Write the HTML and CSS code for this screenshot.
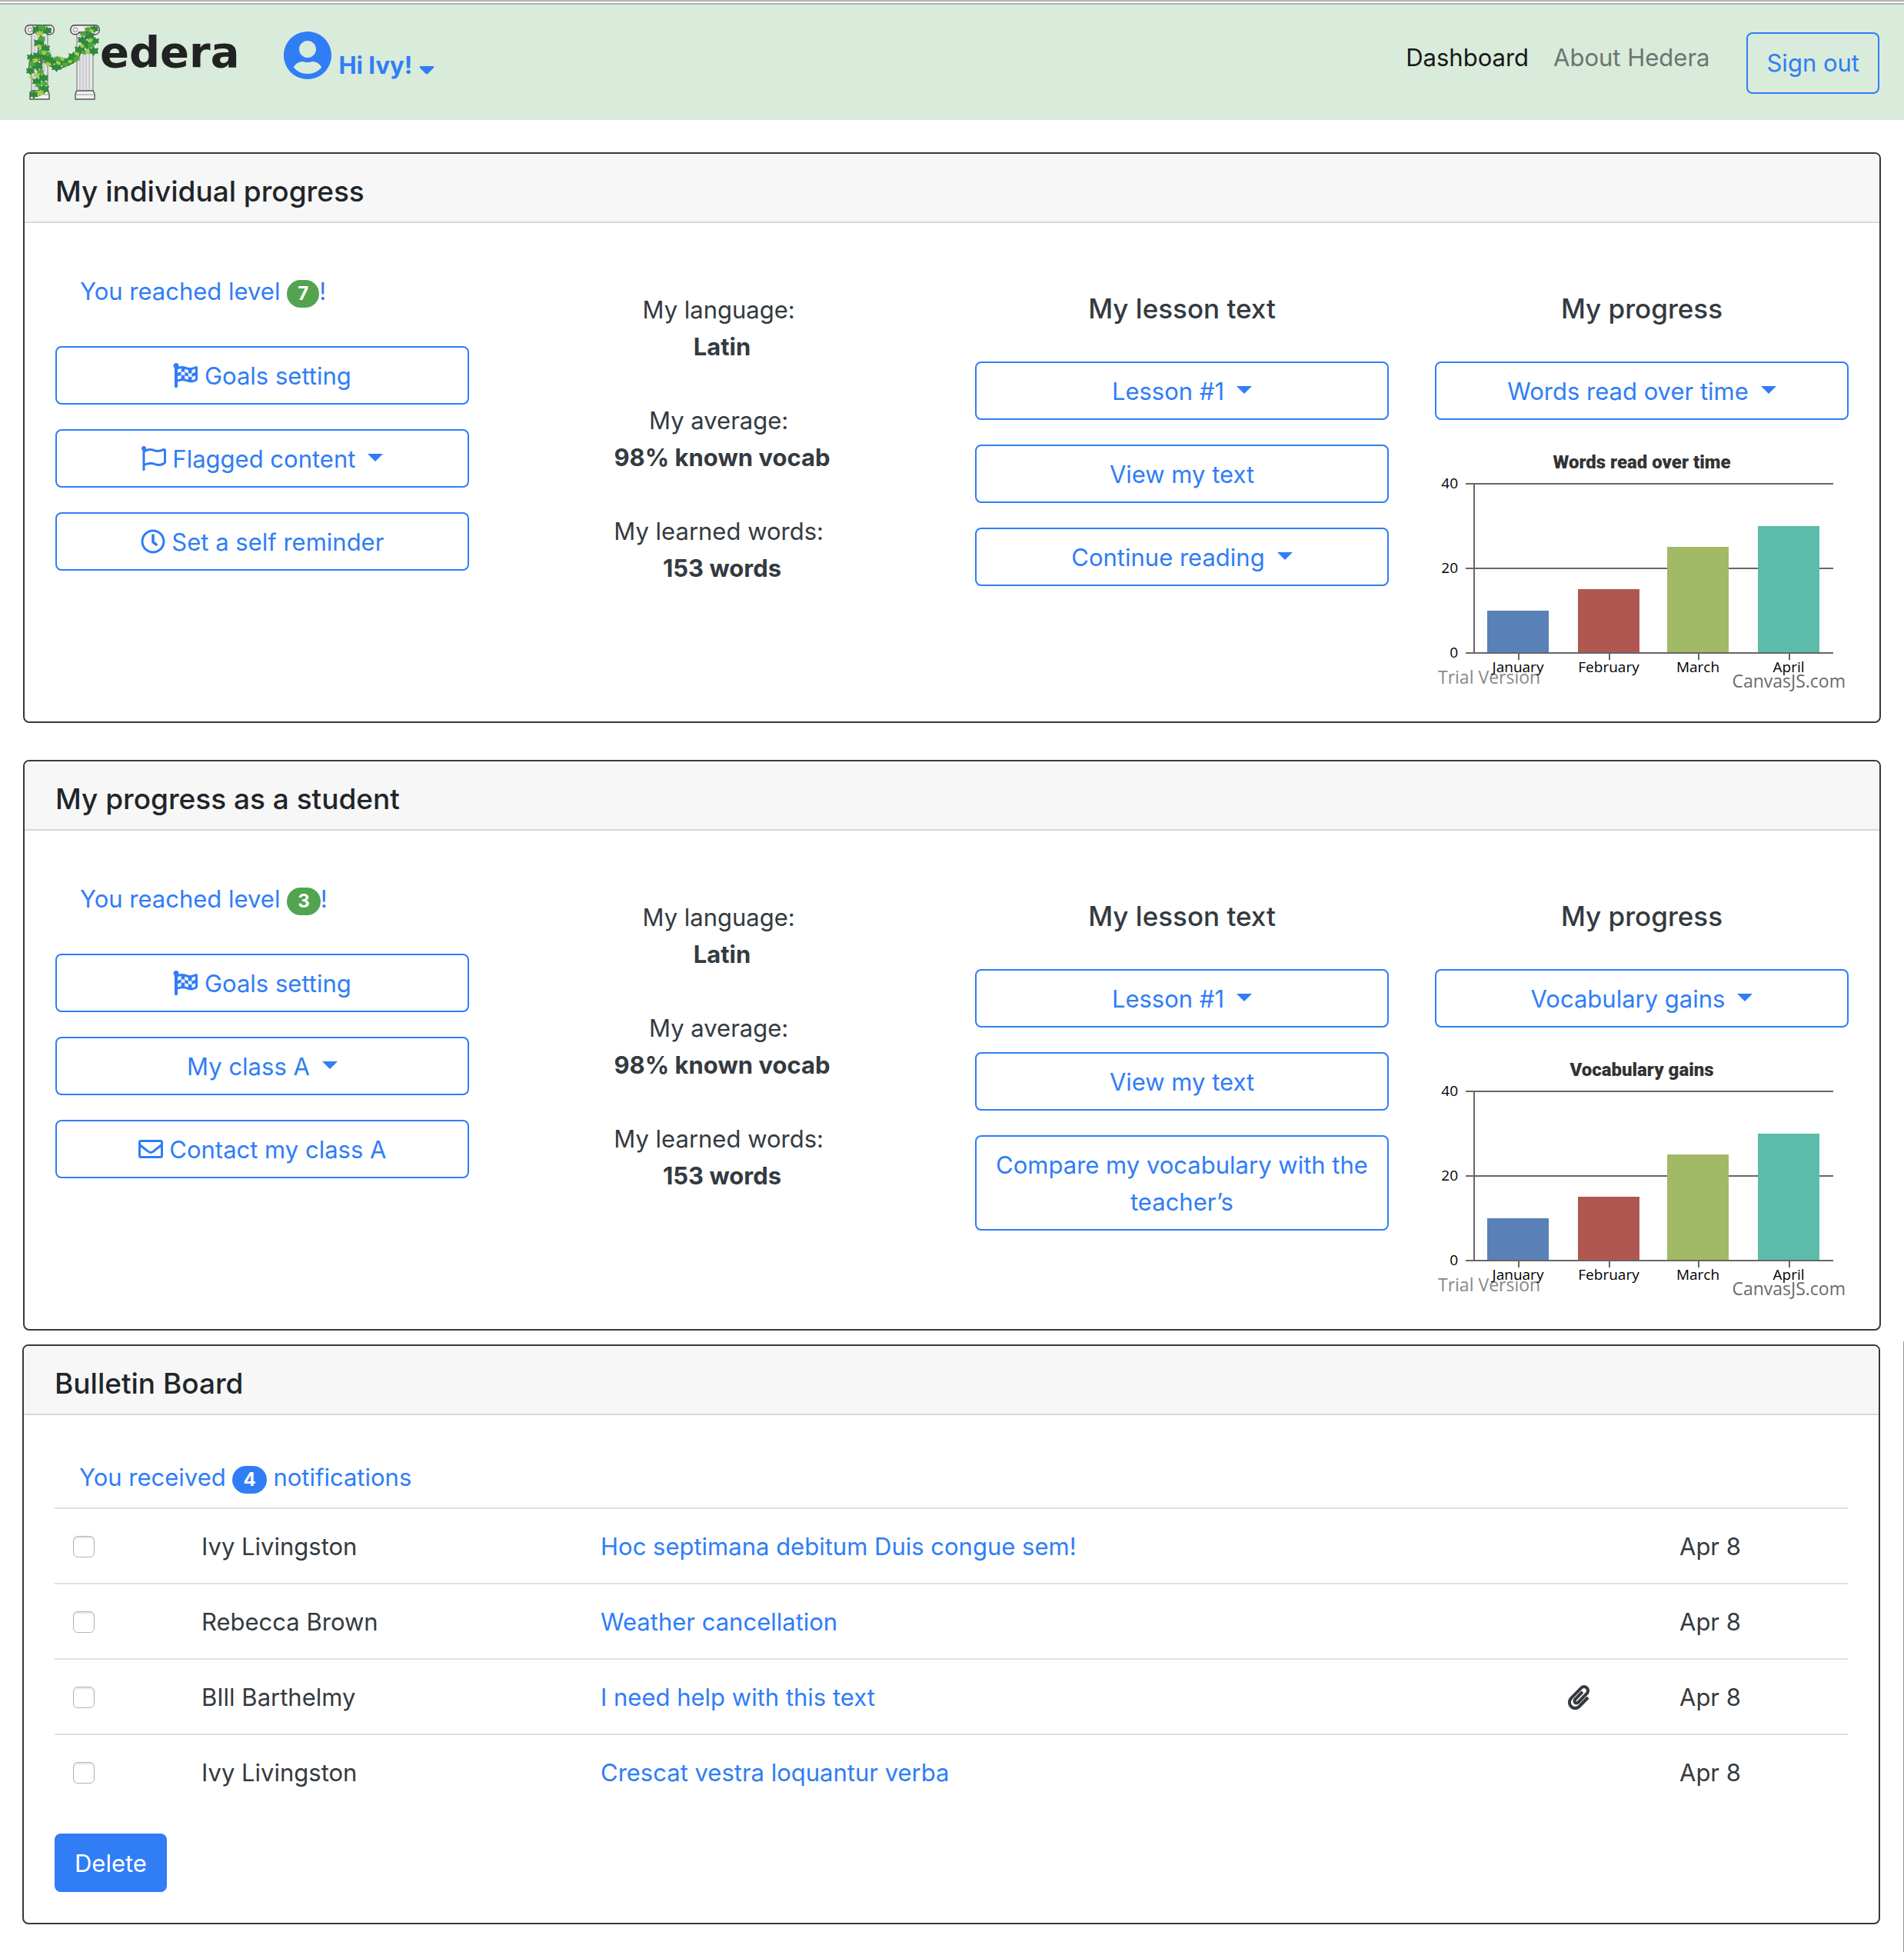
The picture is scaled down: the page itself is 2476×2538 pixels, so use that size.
FILE: index.html
```html
<!DOCTYPE html>
<html lang="en">
<head>
<meta charset="utf-8">
<title>Hedera</title>
<meta name="viewport" content="width=device-width, initial-scale=1">
<link rel="stylesheet" href="styles.css">
</head>
<body>
<svg class="sprite" aria-hidden="true">
  <symbol id="i-user" viewBox="0 0 496 512"><path d="M248 8C111 8 0 119 0 256s111 248 248 248 248-111 248-248S385 8 248 8zm0 96c48.6 0 88 39.4 88 88s-39.4 88-88 88-88-39.4-88-88 39.4-88 88-88zm0 344c-58.7 0-111.3-26.6-146.5-68.2 18.8-35.4 55.6-59.8 98.5-59.8 2.4 0 4.8.4 7.1 1.1 13 4.2 26.6 6.9 40.9 6.9 14.3 0 28-2.7 40.9-6.9 2.3-.7 4.7-1.1 7.1-1.1 42.9 0 79.7 24.4 98.5 59.8C359.3 421.4 306.7 448 248 448z"/></symbol>
  <symbol id="i-caret" viewBox="0 0 320 512"><path d="M31.3 192h257.3c17.8 0 26.7 21.5 14.1 34.1L174.1 354.8c-7.8 7.8-20.5 7.8-28.3 0L17.2 226.1C4.6 213.5 13.5 192 31.3 192z"/></symbol>
  <symbol id="i-goal" viewBox="0 0 512 512"><path d="M243.2 189.9V258c26.1 5.9 49.3 15.6 73.6 22.3v-68.2c-26-5.8-49.4-15.5-73.6-22.2zm223.3-123c-34.3 15.9-76.5 31.9-117 31.9C296 98.8 251.7 64 184.3 64c-25 0-47.3 4.4-68 12 2.8-7.3 4.1-15.2 3.6-23.6C118.1 24 94.8 1.2 66.3 0 34.3-1.3 8 24.3 8 56c0 19 9.5 35.8 24 45.9V488c0 13.3 10.7 24 24 24h16c13.3 0 24-10.7 24-24v-94.4c28.3-12.1 63.6-22.1 114.4-22.1 53.6 0 97.8 34.8 165.2 34.8 48.2 0 86.7-16.3 122.5-40.9 8.7-6 13.8-15.8 13.8-26.4V95.900c.1-23.300-24.200-38.800-45.400-29zM169.600 325.500c-25.800 2.700-50 8.200-73.600 16.600v-70.500c26.200-9.300 47.500-15 73.600-17.400v71.300zM464 191c-23.600 9.800-46.300 19.500-73.600 23.900V286c24.800-3.400 51.400-11.800 73.600-26v70.500c-25.100 16.100-48.500 24.700-73.600 27.100V286c-27 3.700-47.900 1.500-73.600-5.600v67.400c-23.900-7.400-47.300-16.700-73.600-21.300V258c-19.700-4.400-40.800-6.800-73.600-3.800v-70c-22.400 3.100-44.600 10.200-73.600 20.900v-70.500c33.200-12.200 50.100-19.800 73.600-22v71.600c27-3.700 48.400-1.300 73.600 5.700v-67.400c23.700 7.400 47.200 16.700 73.600 21.300v68.400c23.700 5.300 47.600 6.900 73.600 2.700V143c27-4.800 52.300-13.600 73.600-22.500z"/></symbol>
  <symbol id="i-flag" viewBox="0 0 512 512"><path d="M336.174 80c-49.132 0-93.305-32-161.913-32-31.301 0-58.303 6.482-80.721 15.168a48.04 48.04 0 0 0 2.142-20.727C93.067 19.575 74.167 1.594 51.201.104 23.242-1.71 0 20.431 0 48c0 17.764 9.657 33.262 24 41.562V496c0 8.837 7.163 16 16 16h16c8.837 0 16-7.163 16-16v-83.443C109.869 395.28 143.259 384 199.826 384c49.132 0 93.305 32 161.913 32 58.479 0 101.972-22.617 128.548-39.981C503.846 367.161 512 352.051 512 335.855V95.937c0-34.459-35.264-57.768-66.904-44.117C409.193 67.309 371.641 80 336.174 80zM464 336c-21.783 15.412-60.824 32-102.261 32-59.945 0-102.002-32-161.913-32-43.361 0-96.379 9.403-127.826 24V128c21.784-15.412 60.824-32 102.261-32 59.945 0 102.002 32 161.913 32 43.271 0 96.32-17.366 127.826-32v240z"/></symbol>
  <symbol id="i-clock" viewBox="0 0 512 512"><path d="M256 8C119 8 8 119 8 256s111 248 248 248 248-111 248-248S393 8 256 8zm0 448c-110.5 0-200-89.5-200-200S145.500 56 256 56s200 89.500 200 200-89.500 200-200 200zm61.800-104.400l-84.900-61.700c-3.100-2.300-4.900-5.900-4.900-9.700V116c0-6.600 5.400-12 12-12h32c6.600 0 12 5.400 12 12v141.700l66.800 48.600c5.400 3.900 6.500 11.400 2.600 16.800L334.600 349c-3.900 5.300-11.400 6.500-16.800 2.600z"/></symbol>
  <symbol id="i-mail" viewBox="0 0 512 512"><path d="M464 64H48C21.49 64 0 85.49 0 112v288c0 26.51 21.49 48 48 48h416c26.51 0 48-21.49 48-48V112c0-26.51-21.49-48-48-48zm0 48v40.805c-22.422 18.259-58.168 46.651-134.587 106.49-16.841 13.247-50.201 45.072-73.413 44.701-23.208.375-56.579-31.459-73.413-44.701C106.18 199.465 70.425 171.067 48 152.805V112h416zM48 400V214.398c22.914 18.251 55.409 43.862 104.938 82.646 21.857 17.205 60.134 55.186 103.062 54.955 42.717.231 80.509-37.199 103.053-54.947 49.528-38.783 82.032-64.401 104.947-82.653V400H48z"/></symbol>
  <symbol id="i-clip" viewBox="0 0 448 512"><path d="M43.246 466.142c-58.43-60.289-57.341-157.511 1.386-217.581L254.392 34c44.316-45.332 116.351-45.336 160.671 0 43.89 44.894 43.943 117.329 0 162.276L232.214 383.128c-29.855 30.537-78.633 30.111-107.982-.998-28.275-29.97-27.368-77.473 1.452-106.953l143.743-146.835c6.182-6.314 16.312-6.422 22.626-.241l22.861 22.379c6.315 6.182 6.422 16.312.241 22.626L171.427 319.927c-4.932 5.045-5.236 13.428-.648 18.292 4.372 4.634 11.245 4.711 15.688.165l182.849-186.851c19.613-20.062 19.613-52.725-.011-72.798-19.189-19.627-49.957-19.637-69.154 0L90.39 293.295c-34.763 35.56-35.299 93.12-1.191 128.313 34.01 35.093 88.985 35.137 123.058.286l172.06-175.999c6.177-6.319 16.307-6.433 22.626-.256l22.877 22.364c6.319 6.177 6.434 16.307.256 22.626l-172.06 175.998c-59.576 60.938-155.943 60.216-214.77-.485z"/></symbol>
  <symbol id="column" viewBox="0 0 39 98">
    <path d="M9 11h21v77H9z" fill="#e4e4e6" stroke="#777" stroke-width="1"/>
    <path d="M13 13v73M17 13v73M21 13v73M25 13v73" stroke="#c4c4c8" stroke-width="1.4" fill="none"/>
    <path d="M6 .8h27c7 0 7 12 0 12-3 0-5-1-6-3H12c-1 2-3 3-6 3-7 0-7-12 0-12z" fill="#efeff0" stroke="#444" stroke-width="1.4"/>
    <circle cx="7" cy="6.8" r="2.8" fill="none" stroke="#888"/><circle cx="32" cy="6.8" r="2.8" fill="none" stroke="#888"/>
    <path d="M9 86h21l2 4v7H7v-7z" fill="#f2f2f2" stroke="#555" stroke-width="1.4"/>
    <path d="M8 91h23" stroke="#999"/>
  </symbol>
  <symbol id="leaf" viewBox="-6 -6 12 12" overflow="visible"><path d="M0-6l2 3 4-1-1 4 1 3-4 0-2 3-2-3-4 0 1-3-1-4 4 1z"/></symbol>
</svg>

<header class="navbar">
  <a class="brand" href="#">
    <svg class="brand-mark" viewBox="0 0 98 98" role="img" aria-label="H">
      <use href="#column" x="0" y="0" width="39" height="98"/>
      <use href="#column" x="59" y="0" width="39" height="98"/>
      <path d="M20 3c5 14-6 26 0 40s-4 30 0 50M8 48c20-8 24 14 40 8s22-8 26-24 6-20 12-28M5 60l2-14" fill="none" stroke="#4a5a2a" stroke-width="1.5"/>
      <g fill="#2f8a3a">
        <use href="#leaf" x="10" y="0" width="13" height="13"/><use href="#leaf" x="23" y="2" width="12" height="12"/><use href="#leaf" x="12" y="17" width="14" height="14"/><use href="#leaf" x="21" y="25" width="12" height="12"/><use href="#leaf" x="11" y="34" width="13" height="13"/><use href="#leaf" x="3" y="37" width="11" height="11"/><use href="#leaf" x="21" y="36" width="14" height="14"/><use href="#leaf" x="9" y="46" width="15" height="15"/><use href="#leaf" x="29" y="41" width="13" height="13"/><use href="#leaf" x="35" y="49" width="13" height="13"/><use href="#leaf" x="43" y="42" width="12" height="12"/><use href="#leaf" x="51" y="41" width="13" height="13"/><use href="#leaf" x="57" y="35" width="13" height="13"/><use href="#leaf" x="65" y="26" width="14" height="14"/><use href="#leaf" x="75" y="20" width="13" height="13"/><use href="#leaf" x="83" y="28" width="13" height="13"/><use href="#leaf" x="69" y="14" width="12" height="12"/><use href="#leaf" x="78" y="9" width="13" height="13"/><use href="#leaf" x="86" y="16" width="11" height="11"/><use href="#leaf" x="2" y="55" width="11" height="11"/><use href="#leaf" x="18" y="63" width="13" height="13"/><use href="#leaf" x="10" y="68" width="12" height="12"/><use href="#leaf" x="18" y="77" width="14" height="14"/><use href="#leaf" x="6" y="85" width="12" height="12"/><use href="#leaf" x="85" y="0" width="11" height="11"/>
      </g>
      <g fill="#4aa83e">
        <use href="#leaf" x="18" y="-1" width="10" height="10"/><use href="#leaf" x="18" y="14" width="9" height="9"/><use href="#leaf" x="17" y="31" width="9" height="9"/><use href="#leaf" x="5" y="47" width="9" height="9"/><use href="#leaf" x="26" y="34" width="8" height="8"/><use href="#leaf" x="38" y="40" width="9" height="9"/><use href="#leaf" x="49" y="48" width="8" height="8"/><use href="#leaf" x="63" y="40" width="9" height="9"/><use href="#leaf" x="74" y="32" width="8" height="8"/><use href="#leaf" x="82" y="22" width="9" height="9"/><use href="#leaf" x="72" y="8" width="8" height="8"/><use href="#leaf" x="16" y="57" width="9" height="9"/><use href="#leaf" x="14" y="75" width="8" height="8"/><use href="#leaf" x="22" y="73" width="8" height="8"/><use href="#leaf" x="78" y="2" width="9" height="9"/>
      </g>
      <g fill="#a5cf3c">
        <use href="#leaf" x="15" y="7" width="9" height="9"/><use href="#leaf" x="16" y="25" width="6" height="6"/><use href="#leaf" x="22" y="33" width="6" height="6"/><use href="#leaf" x="11" y="43" width="7" height="7"/><use href="#leaf" x="27" y="48" width="7" height="7"/><use href="#leaf" x="41" y="47" width="6" height="6"/><use href="#leaf" x="47" y="43" width="5" height="5"/><use href="#leaf" x="56" y="45" width="6" height="6"/><use href="#leaf" x="65" y="35" width="6" height="6"/><use href="#leaf" x="72" y="25" width="6" height="6"/><use href="#leaf" x="83" y="17" width="6" height="6"/><use href="#leaf" x="79" y="33" width="6" height="6"/><use href="#leaf" x="12" y="62" width="7" height="7"/><use href="#leaf" x="6" y="66" width="5" height="5"/><use href="#leaf" x="16" y="84" width="9" height="9"/><use href="#leaf" x="84" y="5" width="6" height="6"/>
      </g>
    </svg>
    <span class="brand-name">edera</span>
  </a>
  <button class="user-menu" type="button" aria-haspopup="true">
    <svg class="user-icon"><use href="#i-user"/></svg>
    <span class="user-name">Hi Ivy!</span>
    <svg class="user-caret"><use href="#i-caret"/></svg>
  </button>
  <nav class="nav">
    <a class="nav-link active" href="#">Dashboard</a>
    <a class="nav-link" href="#">About Hedera</a>
    <button class="btn btn-nav" type="button">Sign out</button>
  </nav>
</header>

<main>
  <div class="progress">
    <section class="card">
      <h2 class="card-header">My individual progress</h2>
      <div class="card-body columns">
        <div class="col">
          <p class="lead"><a href="#">You reached level <span class="badge badge-green">7</span>!</a></p>
          <div class="stack">
            <button class="btn" type="button"><svg class="icon"><use href="#i-goal"/></svg> Goals setting</button>
            <button class="btn toggle" type="button"><svg class="icon"><use href="#i-flag"/></svg> Flagged content</button>
            <button class="btn" type="button"><svg class="icon"><use href="#i-clock"/></svg> Set a self reminder</button>
          </div>
        </div>
        <div class="col stats">
          <p>My language:&nbsp;<br><strong>Latin</strong></p>
          <p>My average:&nbsp;<br><strong>98% known vocab</strong></p>
          <p>My learned words:&nbsp;<br><strong>153 words</strong></p>
        </div>
        <div class="col">
          <h3 class="col-title">My lesson text</h3>
          <div class="stack">
            <button class="btn toggle" type="button">Lesson #1</button>
            <button class="btn" type="button">View my text</button>
            <button class="btn toggle" type="button">Continue reading</button>
          </div>
        </div>
        <div class="col">
          <h3 class="col-title">My progress</h3>
          <div class="stack">
            <button class="btn toggle" type="button">Words read over time</button>
            <svg class="chart" viewBox="0 0 538 320" role="img" aria-label="Words read over time">
              <text class="chart-title" x="269" y="31">Words read over time</text>
              <path class="grid" d="M40 51H518M40 161H518M51 50V272M109 272v8M227 272v8M343 272v8M461 272v8"/>
              <rect x="68" y="216" width="80" height="54" fill="#5a81b7"/>
              <rect x="186" y="188" width="80" height="82" fill="#b15751"/>
              <rect x="302" y="133" width="80" height="137" fill="#a2b965"/>
              <rect x="420" y="106" width="80" height="164" fill="#5dbba9"/>
              <path class="grid" d="M40 271H518"/>
              <g class="axis-y"><text x="30" y="57">40</text><text x="30" y="167">20</text><text x="30" y="277">0</text></g>
              <text class="note" x="4" y="311">Trial Version</text>
              <g class="axis-x"><text x="108" y="296">January</text><text x="226" y="296">February</text><text x="342" y="296">March</text><text x="460" y="296">April</text></g>
              <text class="note credit" x="534" y="316">CanvasJS.com</text>
            </svg>
          </div>
        </div>
      </div>
    </section>

    <section class="card">
      <h2 class="card-header">My progress as a student</h2>
      <div class="card-body columns">
        <div class="col">
          <p class="lead"><a href="#">You reached level <span class="badge badge-green">3</span>!</a></p>
          <div class="stack">
            <button class="btn" type="button"><svg class="icon"><use href="#i-goal"/></svg> Goals setting</button>
            <button class="btn toggle" type="button">My class A</button>
            <button class="btn" type="button"><svg class="icon"><use href="#i-mail"/></svg> Contact my class A</button>
          </div>
        </div>
        <div class="col stats">
          <p>My language:&nbsp;<br><strong>Latin</strong></p>
          <p>My average:&nbsp;<br><strong>98% known vocab</strong></p>
          <p>My learned words:&nbsp;<br><strong>153 words</strong></p>
        </div>
        <div class="col">
          <h3 class="col-title">My lesson text</h3>
          <div class="stack">
            <button class="btn toggle" type="button">Lesson #1</button>
            <button class="btn" type="button">View my text</button>
            <button class="btn" type="button">Compare my vocabulary with the teacher’s</button>
          </div>
        </div>
        <div class="col">
          <h3 class="col-title">My progress</h3>
          <div class="stack">
            <button class="btn toggle" type="button">Vocabulary gains</button>
            <svg class="chart" viewBox="0 0 538 320" role="img" aria-label="Vocabulary gains">
              <text class="chart-title" x="269" y="31">Vocabulary gains</text>
              <path class="grid" d="M40 51H518M40 161H518M51 50V272M109 272v8M227 272v8M343 272v8M461 272v8"/>
              <rect x="68" y="216" width="80" height="54" fill="#5a81b7"/>
              <rect x="186" y="188" width="80" height="82" fill="#b15751"/>
              <rect x="302" y="133" width="80" height="137" fill="#a2b965"/>
              <rect x="420" y="106" width="80" height="164" fill="#5dbba9"/>
              <path class="grid" d="M40 271H518"/>
              <g class="axis-y"><text x="30" y="57">40</text><text x="30" y="167">20</text><text x="30" y="277">0</text></g>
              <text class="note" x="4" y="311">Trial Version</text>
              <g class="axis-x"><text x="108" y="296">January</text><text x="226" y="296">February</text><text x="342" y="296">March</text><text x="460" y="296">April</text></g>
              <text class="note credit" x="534" y="316">CanvasJS.com</text>
            </svg>
          </div>
        </div>
      </div>
    </section>
  </div>

  <div class="board">
    <section class="card">
      <h2 class="card-header">Bulletin Board</h2>
      <div class="card-body">
        <p class="notice"><a href="#">You received <span class="badge">4</span> notifications</a></p>
        <table class="messages">
          <colgroup><col class="c-check"><col class="c-name"><col><col class="c-clip"><col class="c-date"></colgroup>
          <tbody>
            <tr><td><input type="checkbox" id="m1"></td><td><label for="m1">Ivy Livingston</label></td><td><a href="#">Hoc septimana debitum Duis congue sem!</a></td><td></td><td>Apr 8</td></tr>
            <tr><td><input type="checkbox" id="m2"></td><td><label for="m2">Rebecca Brown</label></td><td><a href="#">Weather cancellation</a></td><td></td><td>Apr 8</td></tr>
            <tr><td><input type="checkbox" id="m3"></td><td><label for="m3">BIll Barthelmy</label></td><td><a href="#">I need help with this text</a></td><td><svg class="clip" role="img" aria-label="Attachment"><use href="#i-clip"/></svg></td><td>Apr 8</td></tr>
            <tr><td><input type="checkbox" id="m4"></td><td><label for="m4">Ivy Livingston</label></td><td><a href="#">Crescat vestra loquantur verba</a></td><td></td><td>Apr 8</td></tr>
          </tbody>
        </table>
        <button class="btn btn-primary" type="button">Delete</button>
      </div>
    </section>
  </div>
</main>
</body>
</html>
```
FILE: styles.css
```css
:root {
  --blue: #307df6;
  --dark: #343a40;
  --ink: #212529;
}

* { box-sizing: border-box; }

body {
  margin: 0;
  background: #fff;
  color: var(--dark);
  font: 400 31px/48px Inter, "Liberation Sans", sans-serif;
}

h2, h3, p { margin: 0; }
a { color: var(--blue); text-decoration: none; }
button { font: inherit; cursor: pointer; }
svg { fill: currentColor; }
.sprite { display: none; }

/* Top bar */
.navbar {
  display: flex;
  align-items: flex-start;
  padding: 26px 32px;
  border-top: 6px double #b4b4b4;
  background: #d9ebdb;
  background-clip: padding-box;
}
.brand { display: flex; color: #222; }
.brand-mark { width: 98px; height: 98px; }
.brand-name {
  font: 700 56px/72px "DejaVu Sans", sans-serif;
}
.user-menu {
  display: flex;
  gap: 9px;
  align-items: flex-start;
  margin: 8px 0 0 58px;
  padding: 0;
  border: 0;
  background: none;
  color: var(--blue);
  font-weight: 700;
}
.user-icon { width: 62px; height: 64px; }
.user-name { padding-top: 21px; }
.user-caret { width: 20px; height: 32px; margin-top: 34px; }
.nav { display: flex; gap: 32px; margin-left: auto; padding-top: 10px; }
.nav-link { padding-top: 9px; color: #6c766e; }
.nav-link.active { color: #161817; }

/* Buttons */
.btn {
  padding: 13px 24px 11px;
  border: 2px solid var(--blue);
  border-radius: 8px;
  background: none;
  color: var(--blue);
  text-align: center;
}
.stack .btn { padding-inline: 20px; }
.btn-nav { margin-left: 16px; padding-block: 14px; }
.btn-primary { margin-top: 32px; background: var(--blue); color: #fff; }
.toggle::after {
  content: "";
  display: inline-block;
  margin-left: 16px;
  border: 10px solid transparent;
  border-top-color: currentColor;
  border-bottom: 0;
  vertical-align: 8px;
}
.icon { width: 32px; height: 32px; vertical-align: -4px; }

/* Cards */
.progress {
  display: flex;
  flex-direction: column;
  gap: 48px;
  padding: 42px 30px 14px;
}
.board {
  padding: 4px 30px 36px 29px;
  border-right: 1px solid #909294;
}
.card { border: 2px solid var(--dark); border-radius: 8px; overflow: hidden; }
.card-header {
  padding: 25px 40px 15px;
  border-bottom: 2px solid #d8d8d8;
  background: #f7f7f7;
  color: var(--ink);
  font-size: 37px;
  font-weight: 500;
  line-height: 48px;
}
.card-body { padding: 40px; }
.columns { display: grid; grid-template-columns: repeat(4, minmax(0, 1fr)); gap: 60px; }
.lead { padding: 25px 32px 47px; }
.stack { display: grid; gap: 32px; }
.stats { display: grid; gap: 48px; align-content: start; padding-top: 49px; text-align: center; }
.col-title {
  padding: 47px 0 45px;
  font-size: 35px;
  font-weight: 500;
  line-height: 48px;
  text-align: center;
}
.badge {
  display: inline-block;
  padding: 0 14px;
  border-radius: 18px;
  background: var(--blue);
  color: #fff;
  font-size: 24px;
  font-weight: 700;
  line-height: 36px;
}
.badge-green { background: #53a451; }

/* Charts */
.chart { display: block; width: 100%; overflow: visible; }
.chart-title { font: 900 24px Impact, Roboto, sans-serif; fill: #333; text-anchor: middle; }
.grid { fill: none; stroke: #666; stroke-width: 2; }
.axis-x, .axis-y { font: 400 19px "Open Sans", sans-serif; fill: #000; }
.axis-x { text-anchor: middle; }
.axis-y { text-anchor: end; }
.note { font: 400 23px "Open Sans", sans-serif; fill: #888; }
.credit { fill: #6b6b6b; text-anchor: end; }

/* Messages */
.notice { padding: 17px 32px 15px; }
.messages { width: 100%; border-collapse: collapse; table-layout: fixed; }
.messages td { padding: 25px 24px 23px; border-top: 2px solid #dee2e6; }
.c-check { width: 167px; }
.c-name { width: 519px; }
.c-clip { width: 145px; }
.c-date { width: 243px; }
.messages input {
  display: block;
  appearance: none;
  width: 28px;
  height: 28px;
  margin: 0;
  border: 1px solid #b4b4b4;
  border-radius: 6px;
  background: #fff;
  box-shadow: inset 0 2px 2px #e4e4e4;
}
.clip { display: block; width: 28px; height: 32px; }
```
